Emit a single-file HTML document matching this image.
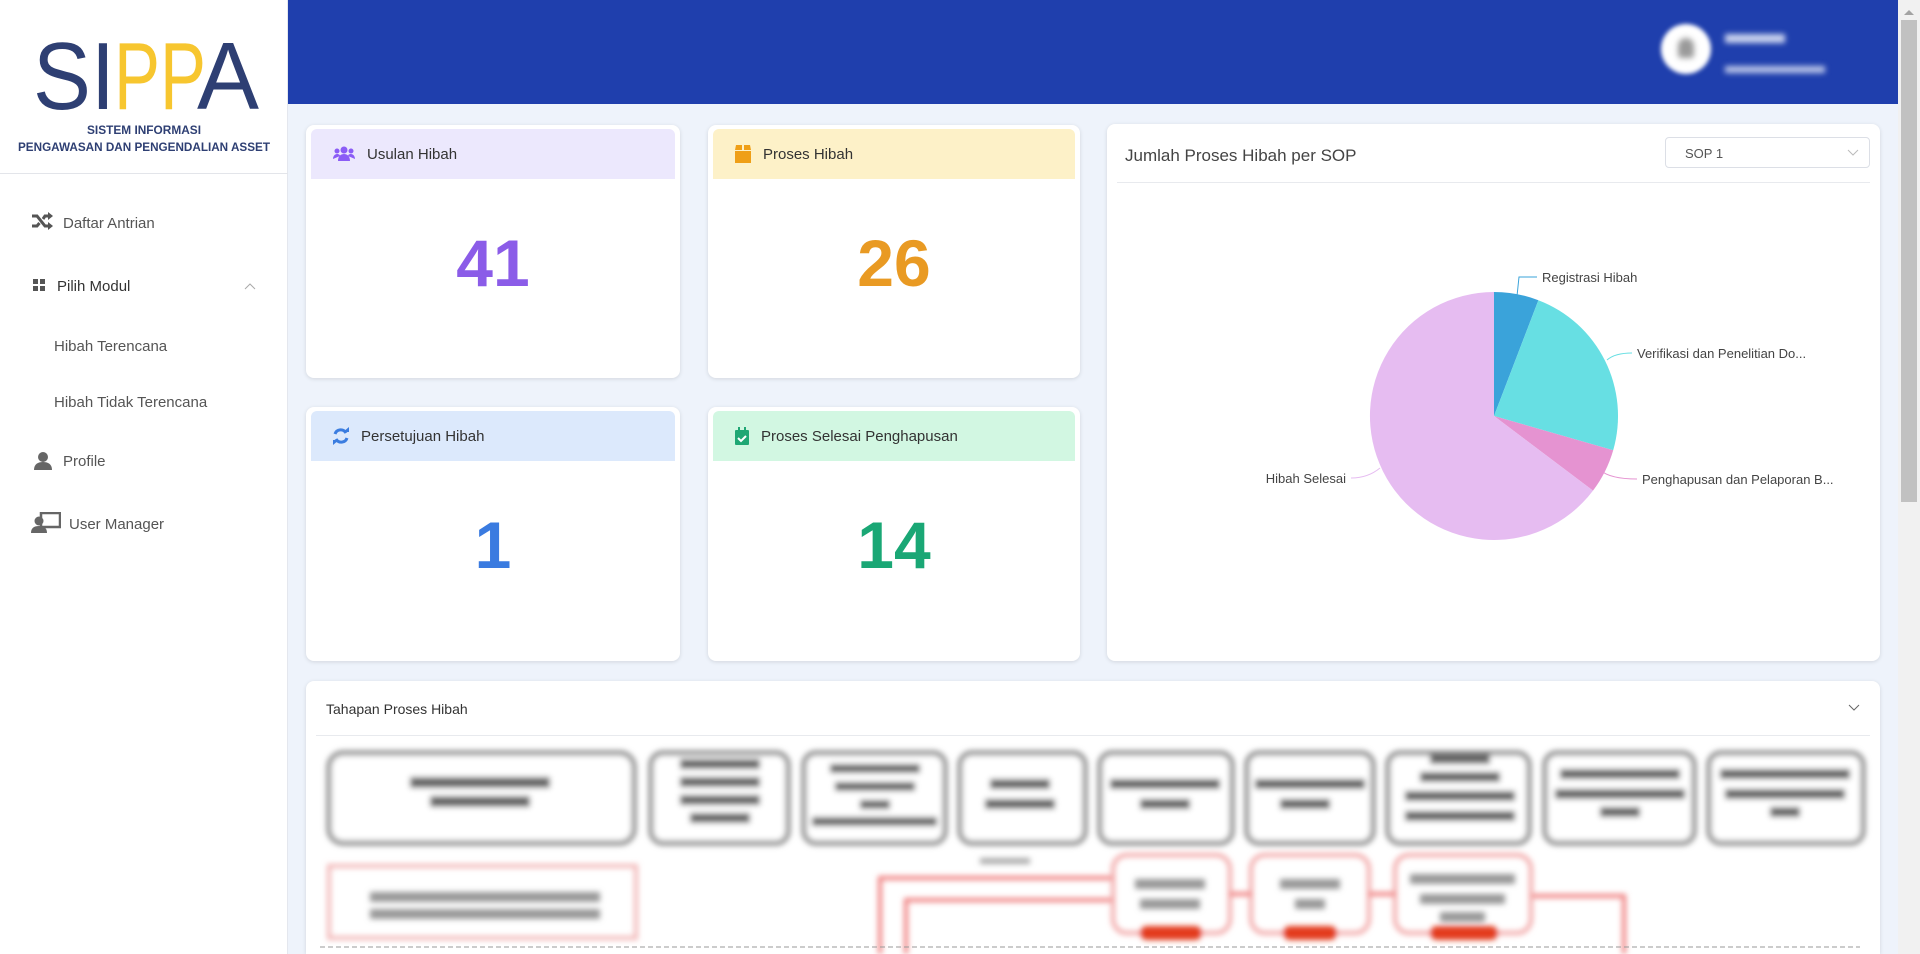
<!DOCTYPE html>
<html><head><meta charset="utf-8"><style>
*{margin:0;padding:0;box-sizing:border-box}
html,body{width:1920px;height:954px;overflow:hidden}
body{background:#eef3fb;font-family:"Liberation Sans",sans-serif;position:relative;color:#333}
.sidebar{position:absolute;left:0;top:0;width:288px;height:954px;background:#fff;border-right:1px solid #e4e7ee}
.divl{position:absolute;left:0;top:173px;width:288px;height:1px;background:#e3e5ea}
.mi{position:absolute;font-size:15px;color:#555}
.header{position:absolute;left:288px;top:0;width:1610px;height:104px;background:#1f3fad}
.scroll{position:absolute;left:1898px;top:0;width:22px;height:954px;background:#f1f1f1}
.thumb{position:absolute;left:1901px;top:20px;width:16px;height:482px;background:#c1c1c1}
.card{position:absolute;background:#fff;border-radius:8px;box-shadow:0 1px 4px rgba(0,0,0,.12)}
.ch{position:absolute;left:5px;right:5px;top:4px;height:50px;border-radius:6px 6px 0 0;font-size:15px;color:#333;display:flex;align-items:center;padding-left:22px}
.ch svg{margin-right:12px}
.num{position:absolute;left:0;right:0;top:100px;text-align:center;font-size:66px;font-weight:bold}
</style></head><body>
<div class="sidebar">
<svg width="288" height="170" style="position:absolute;left:0;top:0">
<text x="33" y="109" font-family="Liberation Sans" font-size="96" textLength="82" lengthAdjust="spacingAndGlyphs" fill="#2e3f73">SI</text>
<text x="114" y="109" font-family="Liberation Sans" font-size="96" textLength="92" lengthAdjust="spacingAndGlyphs" fill="#f7c62f">PP</text>
<text x="197" y="109" font-family="Liberation Sans" font-size="96" textLength="62" lengthAdjust="spacingAndGlyphs" fill="#2e3f73">A</text>
<text x="144" y="134" text-anchor="middle" font-family="Liberation Sans" font-weight="bold" font-size="12" textLength="114" lengthAdjust="spacingAndGlyphs" fill="#2e3f73">SISTEM INFORMASI</text>
<text x="144" y="151" text-anchor="middle" font-family="Liberation Sans" font-weight="bold" font-size="12" textLength="252" lengthAdjust="spacingAndGlyphs" fill="#2e3f73">PENGAWASAN DAN PENGENDALIAN ASSET</text>
</svg>
<div class="divl"></div>
<svg style="position:absolute;left:31px;top:212px" width="22" height="18" viewBox="0 0 22 18"><path d="M1 4h5l8 10h4M1 14h5l2.5-3M12 7l2-3h4" stroke="#555" stroke-width="3" fill="none"/><path d="M17 0l5 4-5 4zM17 10l5 4-5 4z" fill="#555"/></svg>
<div class="mi" style="left:63px;top:215px">Daftar Antrian</div>
<svg style="position:absolute;left:33px;top:279px" width="13" height="13"><rect x="0" y="0" width="5" height="5" fill="#555"/><rect x="7" y="0" width="5" height="5" fill="#555"/><rect x="0" y="7" width="5" height="5" fill="#555"/><rect x="7" y="7" width="5" height="5" fill="#555"/></svg>
<div class="mi" style="left:57px;top:278px;color:#333">Pilih Modul</div>
<svg style="position:absolute;left:244px;top:282px" width="12" height="8"><path d="M1 7l5-5 5 5" stroke="#aaa" fill="none"/></svg>
<div class="mi" style="left:54px;top:338px">Hibah Terencana</div>
<div class="mi" style="left:54px;top:394px">Hibah Tidak Terencana</div>
<svg style="position:absolute;left:33px;top:451px" width="20" height="20"><circle cx="10" cy="6" r="5" fill="#666"/><path d="M1 19c0-6 4-8 9-8s9 2 9 8z" fill="#666"/></svg>
<div class="mi" style="left:63px;top:453px">Profile</div>
<svg style="position:absolute;left:31px;top:512px" width="30" height="22"><rect x="10" y="1" width="19" height="14" fill="none" stroke="#666" stroke-width="2.5"/><circle cx="8" cy="9" r="4.5" fill="#666"/><path d="M0 21c0-5 3-7 8-7s8 2 8 7z" fill="#666"/></svg>
<div class="mi" style="left:69px;top:516px">User Manager</div>
</div>

<div class="header">
<div style="position:absolute;left:1373px;top:24px;width:50px;height:50px;border-radius:50%;background:#fff;filter:blur(2px)"><div style="position:absolute;left:17px;top:14px;width:16px;height:20px;background:#999;border-radius:8px 8px 3px 3px;filter:blur(2px)"></div></div>
<div style="position:absolute;left:1437px;top:34px;width:60px;height:9px;background:#c9d2ee;filter:blur(3px)"></div>
<div style="position:absolute;left:1437px;top:66px;width:100px;height:7px;background:#b9c4e8;filter:blur(3px)"></div>
</div>
<div class="scroll"></div><div class="thumb"></div>
<svg style="position:absolute;left:1903px;top:8px" width="12" height="8"><path d="M1 7l5-5 5 5z" fill="#a3a3a3"/></svg>

<div class="card" style="left:306px;top:125px;width:374px;height:253px">
<div class="ch" style="background:#ece8fd"><svg width="22" height="16"><circle cx="11" cy="4" r="3.5" fill="#8b5cf6"/><circle cx="4" cy="5" r="2.5" fill="#8b5cf6"/><circle cx="18" cy="5" r="2.5" fill="#8b5cf6"/><path d="M5 15c0-5 3-7 6-7s6 2 6 7zM0 13c0-3 2-5 4-5s3 1 3 2zM22 13c0-3-2-5-4-5s-3 1-3 2z" fill="#8b5cf6"/></svg>Usulan Hibah</div>
<div class="num" style="color:#8b5ce8">41</div></div>
<div class="card" style="left:708px;top:125px;width:372px;height:253px">
<div class="ch" style="background:#fdf1c8"><svg width="16" height="18"><path d="M0 6h16v12H0zM1 0h6v5H0zM9 0h6l1 5H9z" fill="#ef9f17"/></svg>Proses Hibah</div>
<div class="num" style="color:#e99a23">26</div></div>
<div class="card" style="left:306px;top:407px;width:374px;height:254px">
<div class="ch" style="background:#dce9fc"><svg width="16" height="18"><path d="M13 6a6 6 0 0 0-11 1M3 12a6 6 0 0 0 11-1" stroke="#3b7de0" stroke-width="3" fill="none"/><path d="M10 5h6V0zM6 13H0v5z" fill="#3b7de0"/></svg>Persetujuan Hibah</div>
<div class="num" style="color:#3a7be0">1</div></div>
<div class="card" style="left:708px;top:407px;width:372px;height:254px">
<div class="ch" style="background:#d2f7e2"><svg width="14" height="18"><rect x="0" y="3" width="14" height="15" rx="1" fill="#1fa774"/><rect x="3" y="0" width="2" height="4" fill="#1fa774"/><rect x="9" y="0" width="2" height="4" fill="#1fa774"/><path d="M3 11l3 3 5-5" stroke="#fff" stroke-width="2" fill="none"/></svg>Proses Selesai Penghapusan</div>
<div class="num" style="color:#1aa775">14</div></div>

<div class="card" style="left:1107px;top:124px;width:773px;height:537px">
<div style="position:absolute;left:18px;top:22px;font-size:17px;color:#444">Jumlah Proses Hibah per SOP</div>
<div style="position:absolute;left:558px;top:13px;width:205px;height:31px;border:1px solid #dcdfe6;border-radius:4px;font-size:13px;color:#555;padding:8px 0 0 19px">SOP 1<svg style="position:absolute;right:10px;top:11px" width="12" height="8"><path d="M1 1l5 5 5-5" stroke="#bbb" fill="none"/></svg></div>
<div style="position:absolute;left:10px;right:10px;top:58px;height:1px;background:#e8eaee"></div>
</div>
<svg style="position:absolute;left:0;top:0" width="1920" height="954">
<path d="M1494 416L1494 292A124 124 0 0 1 1538.4 300.2Z" fill="#3aa3da"/>
<path d="M1494 416L1538.4 300.2A124 124 0 0 1 1613.2 450.2Z" fill="#67dfe3"/>
<path d="M1494 416L1613.2 450.2A124 124 0 0 1 1593 490.6Z" fill="#e593d1"/>
<path d="M1494 416L1593 490.6A124 124 0 1 1 1494 292Z" fill="#e6bcf1"/>
<path d="M1517 296L1519 277H1537" stroke="#3aa3da" fill="none"/>
<path d="M1607 360Q1615 353 1632 353" stroke="#67dfe3" fill="none"/>
<path d="M1600 470Q1610 479 1637 479" stroke="#e593d1" fill="none"/>
<path d="M1380 468Q1368 478 1351 478" stroke="#e6bcf1" fill="none"/>
<g font-family="Liberation Sans" font-size="13" fill="#444">
<text x="1542" y="282">Registrasi Hibah</text>
<text x="1637" y="358">Verifikasi dan Penelitian Do...</text>
<text x="1642" y="484">Penghapusan dan Pelaporan B...</text>
<text x="1346" y="483" text-anchor="end">Hibah Selesai</text>
</g></svg>

<div class="card" style="left:306px;top:681px;width:1574px;height:273px;border-radius:8px 8px 0 0">
<div style="position:absolute;left:20px;top:20px;font-size:14px;color:#333">Tahapan Proses Hibah</div>
<svg style="position:absolute;right:20px;top:23px" width="12" height="8"><path d="M1 1l5 5 5-5" stroke="#666" fill="none"/></svg>
<div style="position:absolute;left:10px;right:10px;top:54px;height:1px;background:#e8eaee"></div>
</div>
<svg style="position:absolute;left:0;top:0" width="1920" height="954">
<defs><filter id="b"><feGaussianBlur stdDeviation="2.8"/></filter></defs>
<g filter="url(#b)">
<g fill="#fff" stroke="#8a8a8a" stroke-width="5">
<rect x="329" y="753" width="305" height="90" rx="14"/>
<rect x="651" y="753" width="137" height="90" rx="12"/>
<rect x="804" y="753" width="141" height="90" rx="12"/>
<rect x="960" y="753" width="125" height="90" rx="12"/>
<rect x="1100" y="753" width="132" height="90" rx="12"/>
<rect x="1247" y="753" width="126" height="90" rx="12"/>
<rect x="1388" y="753" width="141" height="90" rx="12"/>
<rect x="1545" y="753" width="149" height="90" rx="12"/>
<rect x="1709" y="753" width="154" height="90" rx="12"/>
</g>
<g fill="#666">
<rect x="410" y="777" width="140" height="11"/><rect x="430" y="796" width="100" height="11"/>
<rect x="680" y="759" width="80" height="10"/><rect x="680" y="777" width="80" height="10"/><rect x="680" y="795" width="80" height="10"/><rect x="690" y="813" width="60" height="10"/>
<rect x="830" y="764" width="90" height="9"/><rect x="835" y="782" width="80" height="9"/><rect x="860" y="800" width="30" height="9"/><rect x="812" y="817" width="125" height="9"/>
<rect x="990" y="779" width="60" height="10"/><rect x="985" y="799" width="70" height="10"/>
<rect x="1110" y="779" width="110" height="10"/><rect x="1140" y="799" width="50" height="10"/>
<rect x="1255" y="779" width="110" height="10"/><rect x="1280" y="799" width="50" height="10"/>
<rect x="1430" y="754" width="60" height="10"/><rect x="1420" y="772" width="80" height="10"/><rect x="1405" y="791" width="110" height="10"/><rect x="1405" y="811" width="110" height="10"/>
<rect x="1560" y="769" width="120" height="10"/><rect x="1555" y="789" width="130" height="10"/><rect x="1600" y="807" width="40" height="10"/>
<rect x="1720" y="769" width="130" height="10"/><rect x="1725" y="789" width="120" height="10"/><rect x="1770" y="807" width="30" height="10"/>
<rect x="980" y="858" width="50" height="6" fill="#aaa"/>
<rect x="370" y="892" width="230" height="10" fill="#999"/><rect x="370" y="909" width="230" height="10" fill="#999"/>
</g>
<rect x="329" y="866" width="307" height="72" fill="none" stroke="#f2b6b6" stroke-width="4"/>
<g fill="none" stroke="#ef7b7b" stroke-width="4">
<path d="M880 954V878H1112"/><path d="M906 954V900H1112"/>
<path d="M1533 896H1624V954"/>
<rect x="1113" y="855" width="117" height="78" rx="14" stroke="#f2a5a5"/>
<rect x="1251" y="855" width="118" height="78" rx="14" stroke="#f2a5a5"/>
<rect x="1395" y="855" width="136" height="78" rx="14" stroke="#f2a5a5"/>
<path d="M1230 894H1251M1369 894H1395"/>
</g>
<g fill="#999"><rect x="1135" y="879" width="70" height="10"/><rect x="1140" y="899" width="60" height="10"/><rect x="1280" y="879" width="60" height="10"/><rect x="1295" y="899" width="30" height="10"/><rect x="1410" y="874" width="105" height="10"/><rect x="1420" y="894" width="85" height="10"/><rect x="1440" y="912" width="45" height="10"/></g>
<g fill="#e33a1e"><rect x="1140" y="926" width="62" height="14" rx="7"/><rect x="1283" y="926" width="54" height="14" rx="7"/><rect x="1430" y="926" width="68" height="14" rx="7"/></g>
</g>
<path d="M320 947H1860" stroke="#999" stroke-dasharray="5 3"/>
</svg>
</body></html>
